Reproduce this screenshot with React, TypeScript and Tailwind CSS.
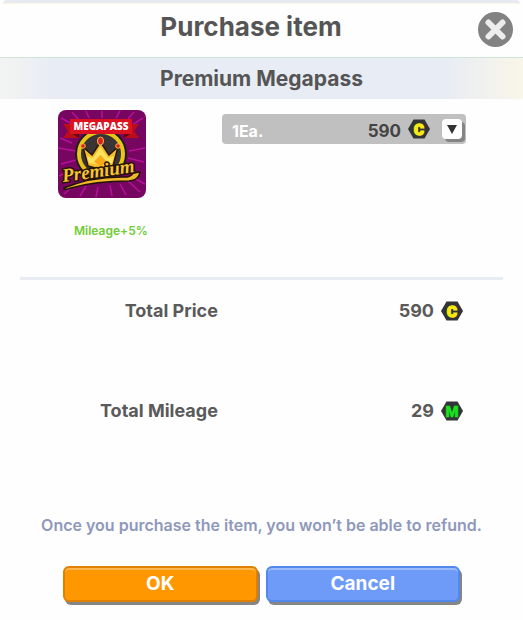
import { useState } from 'react';
import type { ReactNode } from 'react';

const OPTIONS = [{ label: '1Ea.', count: 1, price: 590, mileage: 29 }];

const RAYS = [
  [3, 8, 16, 15], [2, 28, 14, 33], [0, 38, 18, 41], [3, 54, 18, 50], [1, 66, 14, 60],
  [6, 84, 20, 72], [22, 86, 28, 76], [38, 87, 40, 77], [54, 86, 52, 75], [68, 85, 62, 74],
  [82, 82, 70, 71], [87, 74, 76, 68], [86, 52, 70, 48], [87, 38, 71, 41], [85, 8, 74, 15],
  [14, 2, 20, 9], [28, 1, 31, 8], [44, 1, 44, 8], [62, 1, 58, 8], [76, 2, 70, 9],
];

interface CoinProps {
  letter: 'C' | 'M';
  color: string;
}

function Coin({ letter, color }: CoinProps) {
  return (
    <svg viewBox="0 0 22 20" className="h-5 w-[22px] shrink-0" aria-hidden="true">
      <path d="M5.5 0.5h11L22 10l-5.5 9.5h-11L0 10z" fill="#333436" />
      <text
        x="11"
        y="15.5"
        textAnchor="middle"
        fontFamily="Roboto, sans-serif"
        fontWeight="900"
        fontSize="15"
        fill={color}
        stroke={color}
        strokeWidth={letter === 'C' ? 1.5 : 0.5}
      >
        {letter}
      </text>
    </svg>
  );
}

function MegapassBadge() {
  return (
    <svg viewBox="0 0 88 88" className="size-[88px] rounded-lg" role="img" aria-label="Megapass Premium">
      <rect width="88" height="88" fill="#760660" />
      <g stroke="#b6109a" strokeWidth="1.5">
        {RAYS.map(([x1, y1, x2, y2]) => (
          <line key={`${x1}-${y1}`} x1={x1} y1={y1} x2={x2} y2={y2} />
        ))}
      </g>
      <circle cx="43" cy="44" r="26" fill="#1f1c1b" />
      <circle cx="43" cy="44" r="22" fill="#3a3434" stroke="#e9c51b" strokeWidth="4" />
      {/* crown */}
      <path
        d="M25 37l9 8 8.500-13 8.500 13 9-8-5 19q-12 5-25 0z"
        fill="#f5bd2b"
        stroke="#2a1708"
        strokeWidth="1.5"
        strokeLinejoin="round"
      />
      <path d="M29 46l6 2 7.500-11 7.500 11 6-2-2 7q-11 3-23 0z" fill="#ffe25c" />
      <path d="M36 52l6.500-7 6.500 7-6.500 4z" fill="#f8a818" />
      <g fill="#d8202a" stroke="#f6bd39" strokeWidth="1">
        <circle cx="25" cy="36" r="2.3" />
        <ellipse cx="42.500" cy="31" rx="3" ry="4" />
        <circle cx="60" cy="36" r="2.3" />
      </g>
      {/* ribbon */}
      <path d="M5 14h16v14H5l5-7zM81 14H66v14h15l-5-7z" fill="#b90d1a" />
      <path d="M13 23h8v5zM74 23h-8v5z" fill="#65040d" />
      <path d="M12 9h62v15H12z" fill="#dc1221" />
      <text
        x="43"
        y="20"
        textAnchor="middle"
        fontFamily="'Open Sans', sans-serif"
        fontWeight="800"
        fontSize="10"
        fill="#fff"
      >
        MEGAPASS
      </text>
      <path
        d="M6 78Q34 66 69 67q5-1 6-4l7-1q-1 8-11 9-34 0-58 7-5 2-7 1z"
        fill="#f1b72a"
        stroke="#241309"
        strokeWidth="1.5"
      />
      <text
        x="41"
        y="67"
        textAnchor="middle"
        transform="rotate(-8 41 66)"
        fontFamily="'Liberation Serif', serif"
        fontStyle="italic"
        fontWeight="700"
        fontSize="19"
        fill="#f7c433"
        stroke="#241309"
        strokeWidth="3"
        strokeLinejoin="round"
        paintOrder="stroke"
      >
        Premium
      </text>
    </svg>
  );
}

interface TotalRowProps {
  label: string;
  value: number;
  coin: ReactNode;
}

function TotalRow({ label, value, coin }: TotalRowProps) {
  return (
    <div className="flex h-7 items-center text-lg font-bold text-[#5a5a5a]">
      <dt className="w-5/12 text-right">{label}</dt>
      <dd className="flex flex-1 items-center justify-end gap-[7px] pr-[60px]">
        {value}
        {coin}
      </dd>
    </div>
  );
}

export default function App() {
  const [selected, setSelected] = useState(0);
  const option = OPTIONS[selected];

  return (
    <main className="min-h-screen bg-[#fefefe] font-['Inter',sans-serif] text-[#555]">
      <div className="mx-[3px] h-1 rounded-t-sm border-b border-[#fbf5e3] bg-[#e7eaf1]" />
      <header className="flex items-start border-b border-[#cfe5d8] pt-1 pr-[10px] pb-[10px]">
        <h1 className="mt-px flex-1 pl-6 text-center text-[26px] leading-9 font-bold">Purchase item</h1>
        <button type="button" aria-label="Close" className="mt-1 size-[35px] rounded-full bg-[#828282]">
          <svg viewBox="0 0 35 35" className="size-full" aria-hidden="true">
            <path d="M10.5 10.500l14 14M24.500 10.500l-14 14" stroke="#ededed" strokeWidth="6" strokeLinecap="round" />
          </svg>
        </button>
      </header>

      <h2 className="bg-linear-to-r from-[#f3f4f2] via-[#e8ecf4] via-10% to-[#e8ecf4] to-85% text-center text-[21px] leading-8 font-bold">
        <span className="block bg-linear-to-r from-transparent from-85% to-[#f9f6e9] pt-[5px] pb-1">
          Premium Megapass
        </span>
      </h2>

      <section className="flex items-start justify-between pt-[11px] pr-[57px] pl-[58px]">
        <div>
          <MegapassBadge />
          <p className="mt-[25px] pl-4 text-xs leading-4 font-semibold text-[#72cc35]">Mileage+5%</p>
        </div>
        <div className="mt-1 grid h-[30px] w-[244px] items-center rounded-sm bg-[#c0c0c0]">
          <select
            aria-label="Quantity"
            value={selected}
            onChange={(e) => setSelected(Number(e.target.value))}
            className="col-start-1 row-start-1 h-full w-full appearance-none pt-1 pl-[10px] text-base font-bold text-white"
          >
            {OPTIONS.map((o, i) => (
              <option key={o.count} value={i}>
                {o.label}
              </option>
            ))}
          </select>
          <div className="pointer-events-none col-start-1 row-start-1 flex items-center justify-end pr-1">
            <span className="pt-1 text-[17px] leading-6 font-bold text-[#444]">{option.price}</span>
            <span className="ml-[7px]">
              <Coin letter="C" color="#f7e912" />
            </span>
            <span className="ml-3 flex size-5 items-center justify-center rounded-sm bg-white shadow-[3px_3px_0_#858585]">
              <svg viewBox="0 0 10 9" className="h-[9px] w-[10px]" aria-hidden="true">
                <path d="M0 0h10L5 9z" fill="#333" />
              </svg>
            </span>
          </div>
        </div>
      </section>

      <hr className="mx-5 mt-[38px] border-t-[3px] border-[#e6ecf2]" />

      <dl className="mt-[17px] flex flex-col gap-[72px]">
        <TotalRow label="Total Price" value={option.price} coin={<Coin letter="C" color="#f7e912" />} />
        <TotalRow label="Total Mileage" value={option.mileage} coin={<Coin letter="M" color="#16e51c" />} />
      </dl>

      <p className="mt-[88px] text-center text-base leading-6 font-semibold text-[#8f98bb]">
        Once you purchase the item, you won’t be able to refund.
      </p>

      <div className="mt-[29px] flex justify-center gap-2 px-[63px] pb-4 text-[19px] font-bold text-white">
        <button
          type="button"
          className="h-9 flex-1 rounded-md border-2 border-[#df8000] bg-[#ff9700] shadow-[2px_3px_0_#858585,inset_0_2px_0_#ffb64e]"
        >
          OK
        </button>
        <button
          type="button"
          className="h-9 flex-1 rounded-md border-2 border-[#5088ee] bg-[#6e9bf7] shadow-[2px_3px_0_#858585,inset_0_2px_0_#9bbcfc]"
        >
          Cancel
        </button>
      </div>
    </main>
  );
}
